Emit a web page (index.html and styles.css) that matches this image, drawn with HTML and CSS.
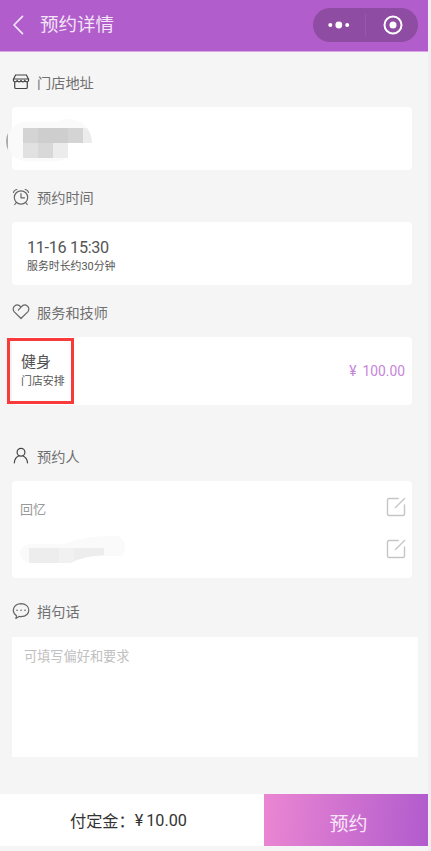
FILE: index.html
```html
<!DOCTYPE html>
<html lang="zh-CN">
<head>
<meta charset="utf-8">
<meta name="viewport" content="width=device-width, initial-scale=1">
<title>预约详情</title>
<link rel="stylesheet" href="styles.css">
</head>
<body>
<div class="page">
  <header class="navbar">
    <svg class="back" width="12" height="20" viewBox="0 0 12 20"><path d="M10.5 1.3 2 10l8.500 8.700"/></svg>
    <h1 class="navbar-title">预约详情</h1>
    <div class="capsule">
      <svg class="dots" width="22" height="8" viewBox="0 0 22 8"><circle cx="2.300" cy="4" r="2"/><circle cx="10.800" cy="4" r="3.400"/><circle cx="19.200" cy="4" r="2"/></svg>
      <span class="divider"></span>
      <svg class="target" width="20" height="20" viewBox="0 0 20 20"><circle class="ring" cx="10" cy="10" r="8.500"/><circle cx="10" cy="10" r="3.500"/></svg>
    </div>
  </header>

  <main class="content">
    <section>
      <h2 class="section-title">
        <svg class="icon dark" viewBox="0 0 18 18"><path d="M3.600 2h10.800M3.600 2 1.400 6.200v1.100c0 2 3.400 2 3.800 0 .4 2 3.400 2 3.800 0 .4 2 3.400 2 3.800 0 .4 2 3.800 2 3.800 0V6.200L14.400 2M1.600 6h14.800M2.700 9v5.200q0 1.300 1.300 1.300h10q1.300 0 1.300-1.300V9"/></svg>
        门店地址
      </h2>
      <div class="card address">
        <svg class="mask" width="90" height="48" viewBox="0 0 90 48">
          <path fill="#aaa" d="M2 15q-4 8 0 17z"/>
          <path fill="#fafafa" d="M17 4h32q6-3 13-3 12 0 18 8 6 7 6 16H62v10q0 8-12 8H18Q2 40 2 23 2 8 17 4z"/>
          <path fill="#cecece" d="M17 10h60v15H17z"/><path fill="#d4d4d4" d="M17 10h15v15H17zM62 10h15v15H62z"/>
          <path fill="#ececec" d="M77 10h4q5 7 5 15h-9zM47 25h15v15H47z"/>
          <path fill="#e1e1e1" d="M17 25h15v15H17z"/><path fill="#d8d8d8" d="M32 25h15v15H32z"/>
        </svg>
      </div>
    </section>

    <section>
      <h2 class="section-title">
        <svg class="icon" viewBox="0 0 18 18"><circle cx="9" cy="9.500" r="6.700"/><path d="M9 5.500v4.300h3.500M1.500 4.500Q2 2 4.800 1.500M16.500 4.500Q16 2 13.200 1.500M4 15l-1.200 1.500M14 15l1.200 1.500"/></svg>
        预约时间
      </h2>
      <div class="card time">
        <div class="time-value">11-16 15:30</div>
        <div class="small">服务时长约30分钟</div>
      </div>
    </section>

    <section>
      <h2 class="section-title">
        <svg class="icon" viewBox="0 0 18 18"><path d="M9 15.500 2.300 8.800C.5 6.800 1 4.100 2.700 2.900 4.600 1.500 7.100 2 9 4.200c1.900-2.200 4.400-2.700 6.300-1.300 1.700 1.200 2.200 3.900.4 5.900zM9 4.200 6.300 7.100"/></svg>
        服务和技师
      </h2>
      <div class="card service">
        <div>
          <div class="service-name">健身</div>
          <div class="small">门店安排</div>
        </div>
        <div class="price"><span>¥</span><span>100.00</span></div>
        <span class="highlight"></span>
      </div>
    </section>

    <section class="booker">
      <h2 class="section-title">
        <svg class="icon dark" viewBox="0 0 18 18"><circle cx="9" cy="5.200" r="3.900"/><path d="M7 8.700Q2.700 10.500 2.300 15.800M11.500 9.300q3.700 2 4 6.500"/></svg>
        预约人
      </h2>
      <div class="card people">
        <div class="person"><span>回忆</span>
          <svg class="edit" viewBox="0 0 20 20"><path d="M12.200 1.500H3q-1.500 0-1.500 1.500v14q0 1.500 1.500 1.500h14q1.500 0 1.500-1.500V8M9.500 10.500l9-9"/></svg>
        </div>
        <div class="person">
          <svg class="phone-mask" width="106" height="30" viewBox="0 0 106 30">
            <path fill="#fafafa" d="M9 10h35Q62 3 84 2h14q7 4 7 10t-3 10H84Q62 22 53 29H9Q0 26 0 19q0-6 9-9z"/>
            <path fill="#ededed" d="M9 14h75v7q-21 1-34 8H9z"/><path fill="#f1f1f1" d="M39 14h15v13l-4 2H39z"/>
          </svg>
          <svg class="edit" viewBox="0 0 20 20"><path d="M12.200 1.500H3q-1.500 0-1.500 1.500v14q0 1.500 1.500 1.500h14q1.500 0 1.500-1.500V8M9.500 10.500l9-9"/></svg>
        </div>
      </div>
    </section>

    <section class="message">
      <h2 class="section-title">
        <svg class="icon" viewBox="0 0 18 18"><path d="M4.500 13.800C-1 10 1 2 9 1.700c10 0 10.800 12.600 0 12.900q-1 0-2-.2l-3.200 2q.7-1.500.7-2.600z"/><path class="bubble-dots" d="M5 8.300h.1M9 8.300h.1M13 8.300h.1"/></svg>
        捎句话
      </h2>
      <div class="note">可填写偏好和要求</div>
    </section>
  </main>

  <footer class="footer">
    <div class="deposit"><span>付定金：</span><span class="amount"><span class="yen">¥</span>10.00</span></div>
    <div class="submit">预约</div>
  </footer>
</div>
</body>
</html>
```
FILE: styles.css
```css
* { box-sizing: border-box; }

body {
  margin: 0;
  background: #efefef;
  font-family: Roboto, "Noto Sans CJK SC", sans-serif;
  color: #555;
}

h1, h2 { margin: 0; font-weight: 400; }
svg { display: block; flex: none; fill: none; stroke-linecap: round; stroke-linejoin: round; }

.page {
  width: 428px;
  height: 851px;
  background: #f5f5f5;
  display: flex;
  flex-direction: column;
}

.navbar {
  height: 52px;
  flex: none;
  display: flex;
  align-items: center;
  padding: 0 10px 2px 12px;
  background: #b15dcb;
  border-bottom: 1px solid #d9a5e6;
}
.back { stroke: #f3e4f8; stroke-width: 1.7; }
.navbar-title {
  margin-left: 16px;
  font-size: 18.500px;
  line-height: 28px;
  color: #f3e4f8;
}
.capsule {
  margin-left: auto;
  width: 105px;
  height: 34px;
  border-radius: 17px;
  background: #8f4ca3;
  display: flex;
  align-items: center;
  padding: 0 15px;
}
.dots, .target { fill: #fff; }
.divider { width: 1px; height: 22px; background: #9a58ad; margin-left: 15px; }
.target { margin-left: auto; }
.ring { fill: none; stroke: #fff; stroke-width: 2; }

.content { flex: 1; padding: 14px 16px 0 12px; }

.section-title {
  height: 34px;
  display: flex;
  align-items: center;
  gap: 7px;
  font-size: 14.200px;
  line-height: 20px;
  color: #707070;
}
.icon { width: 18px; height: 18px; stroke: #666; stroke-width: 1.2; position: relative; top: -1px; }
.icon.dark { stroke: #444; }
.bubble-dots { stroke-width: 1.6; }

.card {
  position: relative;
  height: 63px;
  background: #fff;
  border-radius: 4px;
}
.address { margin: 7px 0 11px; }
.time { margin: 7px 0 11px; padding: 16px 15px 0; }
.service {
  margin: 7px 0 0;
  height: 68px;
  padding: 0 7px 0 9px;
  display: flex;
  align-items: center;
  justify-content: space-between;
}
.mask { position: absolute; left: -6px; top: 11px; }

.time-value { font-size: 16.200px; line-height: 20px; letter-spacing: -0.3px; }
.small { font-size: 10.900px; line-height: 18px; }
.service-name { font-size: 15px; line-height: 22px; color: #505050; }
.price { display: flex; gap: 6px; font-size: 13.800px; color: #c585d9; }
.highlight {
  position: absolute;
  left: -5px;
  top: 1px;
  width: 67px;
  height: 66px;
  border: 3px solid #f93a3a;
}

.booker { margin-top: 35px; }
.people { margin-top: 7px; height: 97px; padding: 6px 6px 0 8px; }
.person {
  height: 42px;
  display: flex;
  align-items: center;
  justify-content: space-between;
  font-size: 13px;
  color: #999;
}
.edit { width: 20px; height: 20px; stroke: #c5c5c5; stroke-width: 1.4; position: relative; top: -1px; }
.phone-mask { margin-left: 0; position: relative; top: -1px; }

.message { margin-top: 17px; }
.note {
  width: 406px;
  height: 120px;
  margin-top: 8px;
  padding: 10px 12px;
  background: #fff;
  font-size: 13.200px;
  line-height: 20px;
  color: #c0c0c0;
}

.footer {
  height: 52px;
  flex: none;
  margin-bottom: 5px;
  display: flex;
  background: #fff;
}
.deposit {
  width: 264px;
  padding-left: 70px;
  display: flex;
  align-items: center;
  font-size: 16.200px;
  color: #333;
}
.amount { display: flex; }
.yen { margin-right: 3px; }
.submit {
  flex: 1;
  display: flex;
  align-items: center;
  justify-content: center;
  padding: 4px 0 0 5px;
  font-size: 19px;
  color: #f9e6fa;
  background: linear-gradient(95deg, #eb86d2, #b15bcd);
}
```
